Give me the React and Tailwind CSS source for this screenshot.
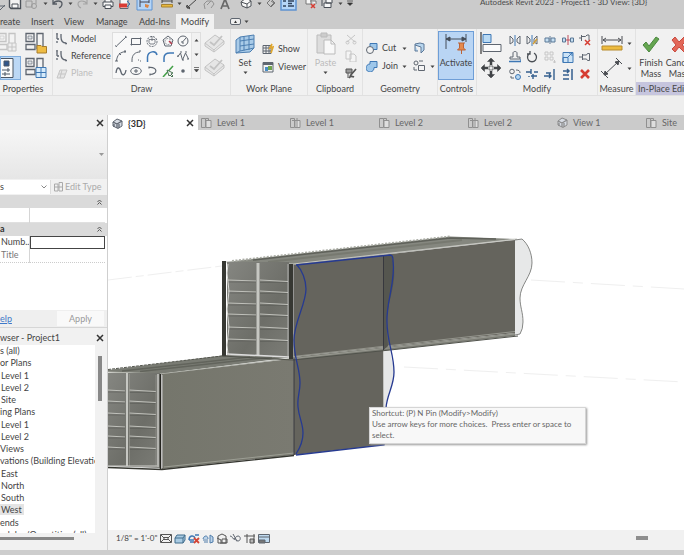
import React from "react";

const G = "#5f6670";
const B = "#3f78b5";
const P = "#c6c6c6";

function Icon({ size = 12, w, h, vb, className = "", children, stroke = G, sw = 1 }) {
  return (
    <svg
      width={w || size}
      height={h || size}
      viewBox={vb || `0 0 ${w || size} ${h || size}`}
      fill="none"
      stroke={stroke}
      strokeWidth={sw}
      className={"block shrink-0 " + className}
      aria-hidden="true"
    >
      {children}
    </svg>
  );
}

function Caret({ className = "" }) {
  return (
    <Icon w={5} h={3} className={className} stroke="none">
      <path d="M0.5 0.5h4L2.5 3z" fill="#444" />
    </Icon>
  );
}

/* ---------- quick access toolbar ---------- */

const quick = [
  ["Open", "w-[9px]", <path key="a" d="M0 10l5-5M0 6h5" />],
  ["Save", "w-[16px]", <g key="a" fill="#f2f2f2" stroke="#4a5058"><path d="M.5 -2h11v10.500H2L.5 7z" strokeWidth="1.400" /><path d="M3 4h6v4H3z" fill="#f8f8f8" /></g>],
  ["Synchronize", "w-[18px]", <g key="a" stroke="#9a9a9a"><path d="M1 1h6v6H1zM4 -1h7v5" /><circle cx="9" cy="6" r="2.500" /></g>],
  ["caret", "w-[9px]"],
  ["Undo", "w-[16px]", <path key="a" stroke="#555b63" strokeWidth="1.300" d="M1 0v4h4M1 4c2-4 9-4 9 0 0 2-1 3-3 4" />],
  ["caret", "w-[9px]"],
  ["Redo", "w-[16px]", <path key="a" stroke="#a5a5a5" strokeWidth="1.200" d="M10 0v4H6M10 4C8 0 1 0 1 4c0 2 1 3 3 4" />],
  ["caret", "w-[9px]"],
  ["Print", "w-[16px]", <g key="a" stroke="#484e56" fill="#f7f7f7"><path d="M3 2v-3h6v3M1 2h10v4.500H1z" /><path d="M3 5h6v3.500H3z" /></g>],
  ["Export PDF", "w-[20px]", <g key="a"><path d="M2 -1h8v9.500H2z" fill="#f7f7f7" /><path d="M1 3.500h8v4H1z" fill="#d93c35" stroke="none" /><path d="M9 1l3 3-3 3" stroke={B} /></g>],
  ["Activate controls", "w-[23px]", <g key="a"><path d="M-1 -1h15v11H-1z" fill="#b5d5f7" stroke="#5f93d1" /><path d="M2 2h9M2 -1v8M11 -1v4" stroke="#445" /><path d="M7 4l4 1-1 3-3-1z" fill="#d98546" stroke="none" /></g>],
  ["Measure", "w-[16px]", <g key="a"><path d="M1 1h10M1 -1v4M11 -1v4" stroke="#444" /><path d="M.5 4.500h11v2.500H.5z" fill="#e8b83d" stroke="#a78231" /></g>],
  ["caret", "w-[9px]"],
  ["Aligned dimension", "w-[17px]", <path key="a" stroke="#444" d="M1 8L11 -1M0 6l4 3M1 5v3h3z" />],
  ["Tag", "w-[17px]", <g key="a" stroke="#929292"><path d="M2 9L1 4l3-3h5l2 3-3 4M4 5l4-4" /></g>],
  ["Text", "w-[20px]", <path key="a" stroke="#686868" strokeWidth="1.700" d="M1 9L5 -1l4 10M3 6h4" />],
  ["Default 3D view", "w-[17px]", <g key="a" stroke="#4b5056" fill="#f7f7f7"><path d="M1 2l5-4 5 3v5l-4 2-5-2z" /><path d="M1 2l6 2 4-3M7 4v4" /></g>],
  ["caret", "w-[9px]"],
  ["Section", "w-[15px]", <path key="a" stroke="#777" d="M1 3l4-4 4 4-4 4zM5 1l3 2-3 3" />],
  ["Thin lines", "w-[24px]", <g key="a"><path d="M0 -1h15v11H0z" fill="#b5d5f7" stroke="#5f93d1" strokeWidth="1.500" /><path d="M2 1h3M2 6h3M7 1h6M7 3.500h4M7 6h6" stroke="#31435e" strokeWidth="1.400" /></g>],
  ["Close inactive", "w-[16px]", <g key="a"><path d="M1 -1h5v5H1zM5 1h6v3" fill="#f7f7f7" stroke="#777" /><path d="M6 4l4 4M10 4L6 8" stroke="#d63d32" strokeWidth="1.500" /></g>],
  ["Switch windows", "w-[17px]", <g key="a" stroke="#474d55" fill="#f6f6f6"><path d="M5 -2h6v5H5zM3 3h7v4.500H3z" /><path d="M1 0v6" /></g>],
  ["caret", "w-[9px]"],
  ["Customize", "w-[12px]", <path key="a" d="M0 1h6M.5 3h5L3 5.500z" stroke="#333" fill="#333" strokeWidth=".7" />],
];

function TitleBar() {
  return (
    <div className="flex h-[14px] items-start overflow-hidden bg-[#cbcbcb]">
      <div className="flex w-[480px] shrink-0 items-start">
        {quick.map(([name, width, art], i) =>
          name === "caret" ? (
            <span key={i} className={"block shrink-0 pt-[2px] " + width}>
              <Caret />
            </span>
          ) : (
            <button key={i} aria-label={name} className={"block h-[12px] shrink-0 " + width}>
              <Icon size={12} className="overflow-visible">{art}</Icon>
            </button>
          )
        )}
      </div>
      <h1 className="-mt-[4px] whitespace-nowrap text-[8px] leading-[12px] text-[#4b4b4b]">
        Autodesk Revit 2023 - Project1 - 3D View: {"{3D}"}
      </h1>
    </div>
  );
}

function RibbonTabs() {
  const tab = "h-[15px] shrink-0 text-left leading-[15px]";
  return (
    <nav className="flex h-[15px] items-start overflow-hidden bg-[#cbcbcb] text-[9px] text-[#444]">
      <button className={tab + " w-[31px]"}>reate</button>
      <button className={tab + " w-[33px]"}>Insert</button>
      <button className={tab + " w-[32px]"}>View</button>
      <button className={tab + " w-[43px]"}>Manage</button>
      <button className={tab + " w-[37px]"}>Add-Ins</button>
      <button className="h-[15px] w-[38px] shrink-0 bg-[#f1f1f1] text-center leading-[15px]">Modify</button>
      <button aria-label="Minimize ribbon" className="ml-[16px] flex h-[15px] items-center gap-[3px]">
        <Icon w={11} h={7}>
          <rect x=".5" y=".5" width="10" height="6" rx="1.500" fill="#eee" />
          <path d="M4 5h3L5.500 2.500z" fill="#333" stroke="none" />
        </Icon>
        <Caret />
      </button>
    </nav>
  );
}

/* ---------- ribbon ---------- */

function Group({ label, width, children, body = "", labelClass = "text-center" }) {
  return (
    <section className={"flex shrink-0 flex-col border-r border-[#e2e2e2] " + width}>
      <div className={"flex h-[53px] " + body}>{children}</div>
      <h2 className={"h-[13px] whitespace-nowrap text-[9px] leading-[13px] text-[#474747] " + labelClass}>{label}</h2>
    </section>
  );
}

function PropIcon({ color = G, accent, kind }) {
  return (
    <Icon size={22} stroke={color}>
      <path d="M1 1.500h8v8H1zM12 1.500h6v15h-6zM1 12.500h9v5H1z" fill="#f3f3f3" strokeWidth="1.300" />
      <path d="M3 4h4v3H3z" fill={kind ? "#dfe3e7" : "none"} strokeWidth=".6" />
      {kind === "folder" && <path d="M12 13.500h4l1 1h4.500v6.500H12z" fill="#eebc44" stroke="#a77d2c" />}
      {kind === "grid" && <path d="M11 10.500h10v10H11zM16 10.500v10M11 15.500h10" fill="#d6ebfb" stroke={B} />}
      {!kind && <path d="M11 11h8v8h-8zM15 11v8M11 15h8" fill="#eee" />}
    </Icon>
  );
}

const drawTools = [
  ["Line", <path key="a" d="M1.500 11L11 2M0 10.500l2 1.500M10 1l2 1.500" />],
  ["Rectangle", <path key="a" d="M1.500 3.500h9v6h-9zM0.500 9.500h2M9.500 3.500h2M10.500 2.500v2M1.500 8.500v2" />],
  ["Inscribed polygon", <g key="a"><circle cx="6" cy="6.500" r="5" strokeDasharray="2 1" /><path d="M3 4.500h6v3L8 9H4L3 7.500zM6 1v5" strokeWidth=".8" /></g>],
  ["Circumscribed polygon", <g key="a"><path d="M6 1l5 4-2 6H3L1 5z" /><circle cx="6" cy="6.500" r="3" strokeDasharray="2 1" strokeWidth=".7" /><path d="M7 6l3 3" stroke="#b63a4c" strokeWidth="1.500" /></g>],
  ["Circle", <g key="a"><circle cx="6" cy="6" r="5" /><path d="M5.500 7L9 3M5 6v2h2" /></g>],
  ["Arc", <path key="a" d="M1.500 11C2 5 5 2 11 1.500M0 11h3M10 0v3M4 3l2 2" />],
  ["Center arc", <path key="a" d="M2 10C2 5 5 2 10 2M1 11h2M9 1h2M8 10h1M10 11h1" />],
  ["Tangent arc", <path key="a" d="M1.500 12V7C2 1 10 0 11 5" stroke={B} strokeWidth="1.500" />],
  ["Fillet arc", <path key="a" d="M2 12V8c0-4 2-5 6-5h4" stroke={B} strokeWidth="1.500" />],
  ["Spline", <path key="a" d="M.5 7l3-4 2 7 3-7 3 6M0 6h2M3 2h2M5 10h2M8 2h2M10 9h2" />],
  ["Spline through points", <path key="a" d="M1 8C2 0 5 3 6 7s4 4 5-2" strokeWidth="1.300" />],
  ["Ellipse", <g key="a"><ellipse cx="6" cy="6" rx="5.300" ry="3.500" /><path d="M6 4v4M4 6h4" /></g>],
  ["Partial ellipse", <path key="a" d="M3 2.500c9-1 9 7 1 7M3 1.500v2M4 8.500v2" strokeWidth="1.200" />],
  ["Pick lines", <g key="a"><path d="M1 12L11 1" stroke="#43a047" strokeWidth="1.500" /><path d="M5 5l6 3-2 1 2 2-1 1-2-2-1 1z" fill="#eee" stroke="#4d7756" /></g>],
  ["Point", <circle key="a" cx="6" cy="6" r="1.800" fill={G} stroke="none" />],
];

const modifyTools = [
  ["Mirror pick axis", <g key="a"><path d="M1 2l3 3v3l-3 2zM11 2L8 5v3l3 2z" /><path d="M6 1v11" stroke={B} /></g>],
  ["Mirror draw axis", <g key="a"><path d="M1 2l3 3v3l-3 2zM11 2L8 5v3l3 2z" /><path d="M6 1v11" stroke={B} /><path d="M7 10l4-5" stroke="#cf9c35" strokeWidth="1.500" /></g>],
  ["Split element", <path key="a" d="M1 4h4v4H1zM7 4h4v4H7zM6 2v8" fill="#c6dff2" stroke="#5b7896" />],
  ["Split with gap", <g key="a"><path d="M0.500 4h3v4h-3zM8.500 4h3v4h-3z" fill="#c6dff2" stroke="#5b7896" /><path d="M6 1v10M4 6h4" stroke="#bf4c5a" /></g>],
  ["Unpin", <g key="a"><path d="M0 4h2M2.500 1v6M2.500 2.500h4L8 1h2v5" /><path d="M6 6l5 5M11 6l-5 5" stroke="#d63d32" strokeWidth="1.500" /></g>],
  ["Offset", <g key="a"><path d="M1 8V6h3V2c0-2 4-2 4 0v4h3v2z" /><path d="M0 10.500h12V8" stroke={B} strokeWidth="1.400" /></g>],
  ["Rotate", <path key="a" d="M4 2.200a4.500 4.500 0 1 0 4 0M4 0v3H1" stroke="#4a4f55" strokeWidth="1.300" />],
  ["Array", <path key="a" d="M1 1h3v3H1zM6 1h3v3H6zM1 6h3v3H1zM6 6h3v3H6zM9 11h3M10.500 9v3" stroke={P} />],
  ["Scale", <path key="a" d="M1 1.500h10v10H1zM1 6.500h5v5H1zM6 6l4-4M7 2h3v3" fill="#cce3f6" stroke={B} />],
  ["Pin", <path key="a" d="M0 6h3M3.500 3v6M3.500 4h4l1-1.500h2v7h-2L7.500 8h-4" />],
  ["Copy", <g key="a"><circle cx="3" cy="3.500" r="2.300" /><circle cx="9" cy="9" r="2.500" fill="#b9d8f2" stroke={B} /><path d="M7 2c3 0 4 1 4 3M2 8v2h3" /></g>],
  ["Trim extend corner", <path key="a" d="M0 4h5M5 1v5M5 8h6M7 6v5M8 4h4M3 8v1" stroke="#345f8e" strokeWidth="1.400" />],
  ["Trim single", <path key="a" d="M0 8h7M5 6l2 2-2 2M10 1v11M2 5h5" stroke="#345f8e" strokeWidth="1.400" />],
  ["Trim multiple", <path key="a" d="M1 3h6M1 7h6M1 11h6M5 1l2 2-2 2M10 1v11" stroke="#345f8e" strokeWidth="1.500" />],
  ["Delete", <path key="a" d="M2 2l8 8M10 2l-8 8" stroke="#d63d32" strokeWidth="2.600" />],
];

function ToolGrid({ tools, className }) {
  return (
    <div className={"grid grid-cols-5 " + className}>
      {tools.map(([name, art]) => (
        <button key={name} aria-label={name} className="flex items-center justify-center">
          <Icon size={12}>{art}</Icon>
        </button>
      ))}
    </div>
  );
}

function Slab() {
  return (
    <Icon size={21} stroke="#c3c3c3">
      <path d="M1 11l10-8 9 6-10 9zM1 11v3l9 6v-3M10 20l10-8V9" fill="#e6e6e6" />
      <path d="M6 10l4 3 8-9" strokeWidth="1.800" />
    </Icon>
  );
}

function Ribbon() {
  const row = "flex items-center whitespace-nowrap text-[9px] leading-[12px] text-[#444]";
  return (
    <div className="h-[86px] overflow-hidden bg-[#eeeeee]">
      <div className="flex h-[67px] border-b border-[#e0e0e0] bg-[#f1f1f1]">
        <Group label="Properties" width="w-[53px]" labelClass="pr-[6px] text-center" body="gap-[4px] pt-[3px]">
          <div className="flex w-[21px] flex-col gap-[2px]">
            <button aria-label="Type properties" className="-ml-[3px] h-[22px]"><PropIcon color="#c4c4c4" /></button>
            <button aria-label="Properties" className="h-[24px] w-[21px] border border-[#7fadde] bg-[#bcd8f5]">
              <Icon w={14} h={22} stroke="#4b5665">
                <path d="M0 1.500h12v19H0" fill="#fafafa" />
                <path d="M3 4h5v5H3z" fill="#31568a" />
                <path d="M1 13h8M1 17h8M7 11v4M4 15v4" />
              </Icon>
            </button>
          </div>
          <div className="flex flex-col gap-[3px]">
            <button aria-label="Family category"><PropIcon kind="folder" /></button>
            <button aria-label="Family types"><PropIcon kind="grid" /></button>
          </div>
        </Group>

        <Group label="Draw" width="w-[178px]" body="pt-[3px]">
          <div className="flex w-[59px] shrink-0 flex-col gap-[3px] pl-[3px]">
            {["Model", "Reference", "Plane"].map((t, i) => (
              <button key={t} className={row + " h-[14px] gap-[3px]"}>
                <Icon size={12} stroke={i === 2 ? P : G}>
                  {i === 2 ? <path d="M1 11L4 3h7L8 11zM3 7h6M6 3l-2 8" fill="#e6e6e6" /> : <path d="M0 1h2M1 2v4M1 8v2M1 6h2M5 1v3c0 4 2 6 5 6M9 10.500h2" strokeWidth="1.300" />}
                </Icon>
                <span className={i === 2 ? "text-[#bdbdbd]" : ""}>{t}</span>
              </button>
            ))}
          </div>
          <div className="flex h-[47px] w-[89px] shrink-0 border border-[#dedede] bg-[#f8f8f8]">
            <ToolGrid tools={drawTools} className="w-[78px]" />
            <div className="flex w-[9px] flex-col items-center justify-around border-l border-[#e3e3e3] bg-[#f1f1f1]">
              <button aria-label="Scroll up"><Caret className="rotate-180" /></button>
              <button aria-label="Scroll down"><Caret /></button>
              <button aria-label="More tools"><Icon w={5} h={5} stroke="#444"><path d="M0 .5h5M.5 2.500h4L2.500 5z" strokeWidth=".7" fill="#444" /></Icon></button>
            </div>
          </div>
          <div className="ml-[3px] flex flex-col gap-[3px]">
            <button aria-label="Draw on face"><Slab /></button>
            <button aria-label="Draw on work plane"><Slab /></button>
          </div>
        </Group>

        <Group label="Work Plane" width="w-[77px]" body="pl-[4px]">
          <button className="flex w-[20px] flex-col items-center pt-[5px] text-[9px] leading-[12px] text-[#444]">
            <Icon size={20} stroke="#4d7fb1">
              <path d="M1 6l4-3 14-2v13l-4 4-14 1z" fill="#a9cbe8" />
              <path d="M5 3v14l-4 2M5 7l14-2M5 12l14-2M9 2.500v14M14 2v14M5 17l14-3" />
            </Icon>
            <span className="pt-[3px]">Set</span>
            <Caret className="mt-[2px]" />
          </button>
          <div className="ml-[7px] flex flex-col gap-[4px] pt-[13px]">
            <button className={row + " h-[14px] gap-[4px]"}>
              <Icon size={12}><path d="M1 2.500h8v8H1zM1 5h8M1 8h8M4 2v9M7 2v9" /><path d="M10 1l-2 4 3-1-2 6" stroke="#e0a72e" strokeWidth="1.700" /></Icon>
              Show
            </button>
            <button className={row + " h-[14px] gap-[4px]"}>
              <Icon size={12}><path d="M1 1.500h10v9.500H1z" fill="#f3f3f3" /><path d="M1 3h10" strokeWidth="2" /><path d="M3 6h3v4H3z" fill="#488cc5" stroke="none" /><path d="M6 5h4v4H6z" fill="#70a44e" stroke="none" /></Icon>
              Viewer
            </button>
          </div>
        </Group>

        <Group label="Clipboard" width="w-[55px]" body="pl-[7px] pt-[3px]">
          <button className="flex w-[21px] flex-col items-center text-[9px] leading-[12px] text-[#bcbcbc]">
            <Icon w={20} h={23} stroke="#bbb"><path d="M1 3h14v18H1z" fill="#ddd" /><path d="M5 1h6v4H5z" fill="#ccc" /><path d="M8 8h7l4 4v10H8z" fill="#f8f8f8" /><path d="M15 8v4h4" /></Icon>
            <span className="pt-[2px]">Paste</span>
            <Caret className="mt-[2px]" />
          </button>
          <div className="ml-[9px] flex flex-col gap-[5px] pt-[1px]">
            <button aria-label="Cut to clipboard"><Icon stroke={P}><path d="M2 2l8 7M10 2L2 9" /><circle cx="2.500" cy="9.500" r="1.500" /><circle cx="9.500" cy="9.500" r="1.500" /></Icon></button>
            <button aria-label="Copy to clipboard"><Icon stroke={P}><path d="M1 1h5v8H1zM5 4h4l2 2v6H5z" fill="#f4f4f4" /></Icon></button>
            <button aria-label="Match type"><Icon stroke="#555"><path d="M1 2h6v4H1zM3 6v5" fill="#999" /><path d="M5 9l6-7M4 11c1-2 3-2 5-1" strokeWidth="1.700" /></Icon></button>
          </div>
        </Group>

        <Group label="Geometry" width="w-[75px]" body="pl-[3px]">
          <div className="flex w-[45px] flex-col gap-[4px] pt-[12px]">
            <button className={row + " h-[14px] gap-[4px]"}>
              <Icon><path d="M4 1.500h7v6H4z" fill="#9ec7ea" stroke={B} /><circle cx="4" cy="8" r="3.500" fill="#f4f4f4" /></Icon>
              Cut
              <Caret className="ml-[2px]" />
            </button>
            <button className={row + " h-[14px] gap-[4px]"}>
              <Icon stroke={B}><path d="M4 1.500h7v6H8a4 4 0 1 1-4-3.500z" fill="#9ec7ea" /></Icon>
              Join
              <Caret />
            </button>
          </div>
          <div className="ml-[2px] flex flex-col gap-[4px] pt-[12px]">
            <button aria-label="Cope" className="flex h-[14px] items-center"><Icon stroke="#5c7898"><path d="M2 2l5-1 4 1v6l-3 3V5L2 3zM2 3v6h3" fill="#b8d6ee" /></Icon></button>
            <button aria-label="Paint" className="flex h-[14px] items-center gap-[5px]"><Icon><circle cx="3" cy="3" r="2" /><path d="M5.500 5.500h6v5h-6zM1 7v3h3M6 1h4" fill="#f4f4f4" /></Icon><Caret /></button>
          </div>
        </Group>

        <Group label="Controls" width="w-[39px]" labelClass="pr-[1px] text-center" body="pt-[2px]">
          <button className="flex h-[49px] w-[36px] flex-col items-center border border-[#6e9ed7] bg-[#b9d5f4] text-[9px] leading-[12px] text-[#444]">
            <Icon w={24} h={23} stroke="#444d59">
              <path d="M2 2v15M22 2v8M2 7h20" />
              <path d="M2 7l4-2v4zM22 7l-4-2v4z" fill="#444d59" />
              <path d="M14 11h7M15.500 11v5l-2 2h8l-2-2v-5M17.500 18v4" fill="#e58a4d" stroke="#bd6437" />
            </Icon>
            <span className="pt-[2px]">Activate</span>
          </button>
        </Group>

        <Group label="Modify" width="w-[121px]" body="pl-[3px]">
          <div className="flex flex-col gap-[3px] pt-[3px]">
            <button aria-label="Align"><Icon size={22}><path d="M1 0v22" strokeWidth="1.300" stroke="#444" /><path d="M3 2.500h8v8H3z" fill="#b9daf4" stroke={B} /><path d="M3 12.500h18v7H3z" fill="#fafafa" /></Icon></button>
            <button aria-label="Move"><Icon size={22} stroke="#404346"><path d="M11 2v6M11 14v6M2 11h6M14 11h6" strokeWidth="2.500" /><path d="M7.500 4.500L11 1l3.500 3.500zM7.500 17.500L11 21l3.500-3.500zM4.500 7.500L1 11l3.500 3.500zM17.500 7.500L21 11l-3.500 3.500z" fill="#404346" strokeWidth=".5" /><path d="M9 9h4v4H9z" fill="#eee" strokeWidth=".7" /></Icon></button>
          </div>
          <ToolGrid tools={modifyTools} className="ml-[4px] mt-[2px] h-[51px] w-[88px]" />
        </Group>

        <Group label="Measure" width="w-[38px]" body="pl-[3px]">
          <div className="flex flex-col gap-[6px] pt-[6px]">
            <button aria-label="Measure between references" className="flex items-center gap-[4px]"><Icon w={22} h={16} stroke="#4a4d52"><path d="M1 1v8M21 1v8M2 5h18M5 3L2 5l3 2M17 3l3 2-3 2" /><path d="M1 11h20v4H1z" fill="#edbb3f" stroke="#b78b2e" /></Icon><Caret /></button>
            <button aria-label="Dimension" className="flex items-center gap-[4px]"><Icon w={22} h={22} stroke="#4a4d52"><path d="M3 18L18 4M0 14l7 7M15 1l6 6" /><path d="M3 18l1-4 3 3zM18 4l-4 1 3 3z" fill="#4a4d52" /></Icon><Caret /></button>
          </div>
        </Group>

        <Group label="In-Place Editor" width="w-[80px]" labelClass="bg-[#c6c5de] pl-[2px] text-left" body="gap-[2px] pl-[2px]">
          <button className="flex w-[26px] flex-col items-center pt-[7px] text-[9px] leading-[11px] text-[#444]">
            <Icon w={18} h={17}><path d="M1 9l3-3 3 4 7-9 3 2-10 13z" fill="#65a650" stroke="#4b8740" /></Icon>
            <span className="pt-[4px]">Finish<br />Mass</span>
          </button>
          <button className="flex w-[26px] flex-col items-center pt-[7px] text-[9px] leading-[11px] text-[#444]">
            <Icon w={17} h={17}><path d="M1 4l3-3 4 5 5-5 3 3-5 5 5 4-3 3-5-5-4 5-3-3 4-4z" fill="#e26758" stroke="#c8493e" /></Icon>
            <span className="pt-[4px]">Cancel<br />Mass</span>
          </button>
        </Group>
      </div>
    </div>
  );
}

/* ---------- left palettes ---------- */

function Close({ label }) {
  return (
    <button aria-label={label} className="shrink-0">
      <Icon size={8} stroke="#333" sw={1.500}><path d="M1 1l6 6M7 1L1 7" /></Icon>
    </button>
  );
}

function Chevrons() {
  return (
    <Icon w={5} h={6} stroke="#555"><path d="M.5 3l2-2 2 2M.5 5.500l2-2 2 2" /></Icon>
  );
}

function PropertiesPalette() {
  const th = "w-[29px] overflow-hidden whitespace-nowrap border-r border-[#d5d5d5] p-0 text-left font-normal";
  return (
    <section className="flex h-[213px] flex-col border-b border-[#d6d6d6] bg-white text-[9px] leading-[12px]">
      <header className="flex h-[15px] shrink-0 items-center justify-end bg-[#f1f1f1] pr-[3px]"><Close label="Close properties" /></header>
      <div className="flex h-[49px] shrink-0 items-center justify-end bg-linear-to-b from-[#f6f6f6] to-[#e6e6e6] pr-[3px]">
        <button aria-label="Type selector"><Icon w={5} h={3} stroke="none"><path d="M0 0h5L2.500 3z" fill="#999" /></Icon></button>
      </div>
      <div className="flex h-[16px] shrink-0 items-center bg-[#f1f1f1] py-[1px]">
        <div className="relative h-[14px] w-[51px] border-r border-[#ddd] bg-white">
          <select aria-label="Filter" className="h-[14px] w-full appearance-none bg-transparent text-[9px] leading-[12px] text-[#444]"><option>s</option></select>
          <Icon w={6} h={4} stroke="#888" className="pointer-events-none absolute right-[3px] top-[5px]"><path d="M.5.5L3 3 5.500.5" /></Icon>
        </div>
        <button className="flex items-center gap-[2px] whitespace-nowrap pl-[3px] text-[9px] text-[#aaa]">
          <Icon w={9} h={10} stroke="#aaa"><path d="M.5 2h3.500v7H.5zM5 .5h3.500V9H5zM.5 5h8" /></Icon>
          Edit Type
        </button>
      </div>
      <div className="flex h-[13px] shrink-0 items-center justify-end bg-[#dadada] pr-[5px]"><Chevrons /></div>
      <table className="w-[105px] table-fixed border-collapse">
        <tbody>
          <tr className="h-[14px] border-b border-[#e0e0e0]"><th className={th}></th><td /></tr>
        </tbody>
      </table>
      <div className="flex h-[13px] shrink-0 items-center justify-between bg-[#dadada] pr-[5px] font-bold text-[#333]">a<Chevrons /></div>
      <table className="w-[105px] table-fixed border-collapse">
        <tbody>
          <tr className="h-[13px]">
            <th className={th + " pl-px text-[#444]"}><label htmlFor="numb">Numb...</label></th>
            <td className="p-0"><input id="numb" className="block h-[13px] w-full border border-[#444] bg-white" /></td>
          </tr>
          <tr className="h-[14px] border-b border-dotted border-[#ccc]">
            <th className={th + " pl-px text-[#777]"}>Title</th><td />
          </tr>
        </tbody>
      </table>
      <footer className="mt-auto flex h-[17px] shrink-0 items-center justify-between bg-[#efefef] pr-[3px]">
        <a href="#help" className="text-[#3e78c8] underline">elp</a>
        <button className="h-[15px] w-[47px] bg-[#f9f9f9] text-[#999]">Apply</button>
      </footer>
    </section>
  );
}

const tree = [
  ["s (all)", 0], ["or Plans", 0], ["Level 1", 1], ["Level 2", 1], ["Site", 1], ["ing Plans", 0], ["Level 1", 1], ["Level 2", 1],
  ["Views", 0], ["vations (Building Elevatio", 0], ["East", 1], ["North", 1], ["South", 1], ["West", 1], ["ends", 0], ["edules/Quantities (all)", 0],
];

function ProjectBrowser() {
  return (
    <section className="flex min-h-0 flex-1 flex-col pt-[3px] text-[9px] leading-[12px] text-[#444]">
      <header className="flex h-[14px] shrink-0 items-center justify-between pr-[3px]">
        <h2>wser - Project1</h2>
        <Close label="Close project browser" />
      </header>
      <div className="flex min-h-0 flex-1">
        <div className="min-w-0 flex-1 overflow-hidden bg-white">
          <ul className="flex h-[196px] flex-col">
            {tree.map(([t, d], i) => (
              <li key={i} className={"flex-1 whitespace-nowrap " + (d ? "pl-px" : "")}>
                <span className={t === "West" ? "-ml-px bg-[#e4e4e4] pl-px pr-[2px]" : ""}>{t}</span>
              </li>
            ))}
          </ul>
        </div>
        <div className="w-[12px] shrink-0 pl-[3px] pt-[11px]"><div className="h-[45px] w-[4px] bg-[#888]" /></div>
      </div>
      <div className="h-[17px] shrink-0 pt-[4px]"><div className="h-[3px] w-[74px] bg-[#888]" /></div>
    </section>
  );
}

/* ---------- drawing area ---------- */

function House({ stroke = G }) {
  return <Icon size={11} stroke={stroke}><path d="M1 4l4-3 5 2v5L6 10.500 1 8z" fill="#d7dce4" /><path d="M1 4l4 2 5-3M5 6v4M2 6v3M7 6v4" strokeWidth="1.300" /></Icon>;
}

function Sheet({ ceiling }) {
  return <Icon size={11} stroke="#909090"><path d="M.5 1.500h4v9h-4z" /><path d="M5 3.500h5v7H5z" fill="#dedede" />{ceiling && <path d="M2 3.500h7M7 1v9" />}{!ceiling && <path d="M4.500 1.500h3v2" />}</Icon>;
}

const viewTabs = [["Level 1", 0], ["Level 1", 1], ["Level 2", 0], ["Level 2", 1], ["View 1", 2], ["Site", 0]];

function ViewTabs() {
  return (
    <nav className="flex h-[15px] shrink-0 overflow-hidden bg-[#cbcbcb] text-[9px] leading-[15px]">
      <div className="flex w-[90px] shrink-0 items-center bg-white pl-[4px] pr-[4px] pt-px">
        <House />
        <button className="ml-[5px] font-bold text-[#333]">{"{3D}"}</button>
        <span className="ml-auto"><Close label="Close view" /></span>
      </div>
      {viewTabs.map(([t, k], i) => (
        <button key={i} className="flex w-[89px] shrink-0 items-center gap-[5px] pl-[3px] text-[#666]">
          {k === 2 ? <House stroke="#8b8b8b" /> : <Sheet ceiling={k === 1} />}
          {t}
        </button>
      ))}
    </nav>
  );
}

const upperRails = [281, 292, 304, 315, 328, 340];
const lowerRails = [391, 402, 414, 427, 437, 448];

function Model() {
  return (
    <svg viewBox="108 130 576 400" className="block h-full w-full" fill="none" role="img" aria-label="Two stacked shipping containers">
      <defs>
        <linearGradient id="door" x1="0" y1="0" x2="1" y2="1">
          <stop offset="0" stopColor="#858681" /><stop offset=".6" stopColor="#6d6e68" /><stop offset="1" stopColor="#7b7c76" />
        </linearGradient>
        <linearGradient id="side" x1="0" y1="0" x2="1" y2="0">
          <stop offset="0" stopColor="#75766c" /><stop offset="1" stopColor="#7a7a71" />
        </linearGradient>
      </defs>
      <g stroke="#efefef">
        <path d="M108 280L222 266" strokeDasharray="24 4 8 4" />
        <path d="M531 280L684 289M404 367L684 382" strokeDasharray="34 8 10 8" />
      </g>
      {/* lower container */}
      <path d="M108 370L226 355L294 357L161 374L108 372z" fill="#797b73" />
      <path d="M108 369.500L226 355.500" stroke="#55574f" strokeDasharray="3 1" />
      <path d="M122 371L250 357M140 371.500L272 357" stroke="#62645c" strokeWidth="1.500" />
      <path d="M108 372L161 374L294 358" stroke="#b5b7af" />
      <path d="M108 373h52v95l-52-2z" fill="url(#door)" />
      {lowerRails.map((y) => (
        <g key={y}>
          <path d={`M108 ${y - 1}L125 ${y}M129 ${y - 1}l27 1.500`} stroke="#c0c1bb" />
          <path d={`M108 ${y + 1}h17M129 ${y + 1.500}h27`} stroke="#5b5c57" strokeWidth=".6" />
        </g>
      ))}
      <path d="M127 373v93" stroke="#c6c7c2" strokeWidth="2" />
      <path d="M129.500 374v92M156 375v91" stroke="#96978f" strokeWidth=".7" />
      <path d="M108 466h49" stroke="#d0d0cc" />
      <path d="M158 374v93" stroke="#c9c9c5" strokeWidth="1.500" />
      <path d="M160.500 374v95" stroke="#24241f" strokeWidth="1.600" />
      <path d="M162 374L294 358.500V455L162 469z" fill="url(#side)" />
      <path d="M162.500 375v93" stroke="#bbb" strokeWidth=".6" />
      <path d="M108 467.500L162 469.500L294 455.500" stroke="#363731" strokeWidth="1.300" />
      <path d="M164 467L294 453" stroke="#9c9e94" />
      <path d="M294 358L383.500 349V445L294 455z" fill="#65645d" />
      <path d="M383.500 349L391 347C389 356 394 362 394 372C394 386 387 394 386 408L384 445z" fill="#e6e7e7" />
      {/* upper container */}
      <path d="M226 262L450 236.500L517 239L293 265z" fill="#85877f" />
      <path d="M232 261L450 236.500" stroke="#aaaca4" strokeWidth="2" strokeDasharray="2 1.500" />
      <path d="M253 260L450 238L496 239" stroke="#5f615a" strokeWidth="1.500" />
      <path d="M268 262L462 240" stroke="#777970" strokeWidth="2" />
      <path d="M226 262L293 264L517 239" stroke="#c5c6c0" />
      <path d="M227 262h62v95l-62-2z" fill="url(#door)" />
      {upperRails.map((y) => (
        <g key={y}>
          <path d={`M228 ${y - 1}l28 1M260 ${y - 1}l28 1.500`} stroke="#c0c1bb" />
          <path d={`M228 ${y + 1}h28M260 ${y + 1.500}h28`} stroke="#5b5c57" strokeWidth=".6" />
        </g>
      ))}
      <path d="M228 264q-2 9 0 18t0 18t0 18t0 18t0 18" stroke="#d8d8d4" />
      <path d="M258 263v92" stroke="#c6c7c2" strokeWidth="3" />
      <path d="M227 354L289 357" stroke="#ddd" strokeWidth="1.500" />
      <path d="M222 261h4v95h-4z" fill="#373833" />
      <path d="M289 264h4v95h-4z" fill="#373833" />
      <path d="M288 264v92" stroke="#ccc" strokeWidth=".7" />
      <path d="M293 265L515 240V333L293 357z" fill="#65645d" />
      <path d="M293.500 265v92" stroke="#aaa" strokeWidth=".7" />
      <path d="M293 357L515 333V336L390 350L293 360z" fill="#7c7d75" />
      <path d="M222 356L293 360L390 350L518 336" stroke="#50524b" />
      <path d="M293 356.500L515 331.500M293 358.500L515 334" stroke="#9fa198" strokeWidth=".8" />
      <path d="M515 240L522 239C528 244 532 253 532 263C532 276 520 285 520 298C520 307 523 312 523 322Q523 329 520 334L515 335z" fill="#e7e8e8" />
      <path d="M515 240L522 239C528 244 532 253 532 263C532 276 520 285 520 298C520 307 523 312 523 322Q523 329 520 334L515 335" stroke="#696b68" strokeWidth=".8" />
      <path d="M383.500 256L391 255C397 270 394 284 389 304Q385 322 388 346L383.500 350z" fill="#55564f" />
      <path d="M383.500 256v94M294 358v97" stroke="#2d2f38" strokeWidth=".8" />
      {/* selected outline */}
      <g stroke="#263a91" strokeWidth="1.300">
        <path d="M296 265L390 255Q393 255 393 260C396 282 386 301 387 322C387 342 394 354 394 372C394 386 387 394 386 408L384 445L296 455" />
        <path d="M297 265C302 270 306 280 306 289C306 304 294 322 294 340C294 359 300 368 300 383C300 392 297 398 298 407C299 418 303 423 303 433C303 442 300 448 296 454" />
      </g>
    </svg>
  );
}

const viewIcons = [
  ["Detail level", <path key="a" d="M.5 1.500h11v8H.5zM1 2l3 3M11 2L8 5M1 9l3-3M11 9L8 6M4 4.500h4v2H4z" stroke="#555" />],
  ["Visual style", <path key="a" d="M1 5l2-3h8v5l-2 3H1zM1 5h8v5M9 5l2-3" fill="#a9cbe3" stroke="#416c8c" />],
  ["Sun path", <g key="a"><path d="M1 7c0-5 5-5 6-2M1 7h5M2 9h4M7 2h4" stroke={B} strokeWidth="1.500" /><path d="M6 5l5 5M11 5l-5 5" stroke="#d34435" strokeWidth="1.800" /></g>],
  ["Shadows", <path key="a" d="M1 7h5M2 9h4M1 6c1-4 5-4 5 0M8 2l3 2v5l-3 1z" fill="#bcd4ea" stroke="#507daa" />],
  ["Crop view", <path key="a" d="M2 3l4-2 4 2v7H2zM1 5l4 2v4M6 6h5v4H6z" stroke="#555" />],
  ["Show crop", <path key="a" d="M0 3c3 0 2 3 4 3 2 0 1-3 4-3s3 5 0 5-2-2-4-2M3 1l4 7" />],
  ["Lock view", <path key="a" d="M0 3h11M3 1v9M10 1v9M6 6h4v4H6z" fill="#b6b6b6" stroke="#555" />],
  ["Temporary hide", <g key="a"><path d="M.5 1.500h11v8H.5zM1 4h10" fill="#bfdaf0" /><path d="M1 7h6v3H1z" fill="#777" /></g>],
];

function ViewBar() {
  return (
    <div className="flex h-[20px] shrink-0 items-center bg-[#f1f1f1] pb-[4px] pl-[8px]">
      <button className="w-[44px] shrink-0 whitespace-nowrap text-left text-[8px] leading-[12px] text-[#444]">1/8" = 1'-0"</button>
      <div className="flex gap-[2px]">
        {viewIcons.map(([n, art]) => (
          <button key={n} aria-label={n}><Icon w={12} h={11}>{art}</Icon></button>
        ))}
      </div>
      <div className="ml-auto mr-[36px] h-[4px] w-[12px] bg-[#8e8e8e]" />
    </div>
  );
}

export default function App() {
  return (
    <div className="flex h-screen w-full flex-col overflow-hidden bg-[#cdcdcd] font-['Lato','Open_Sans',sans-serif]">
      <TitleBar />
      <RibbonTabs />
      <Ribbon />
      <div className="flex min-h-0 flex-1 pb-[5px]">
        <aside className="flex w-[108px] shrink-0 flex-col border-r border-[#cfcfcf] bg-[#f1f1f1]">
          <PropertiesPalette />
          <ProjectBrowser />
        </aside>
        <main className="flex min-w-0 flex-1 flex-col bg-white">
          <ViewTabs />
          <div className="relative min-h-0 flex-1">
            <Model />
            <div role="tooltip" className="absolute left-[261px] top-[277px] w-[217px] whitespace-pre border border-[#d5d5d5] bg-[#f8f8f8] px-[2px] pb-[2px] text-[8px] leading-[11px] text-[#666] shadow-[1px_1px_2px_#999]">
              {"Shortcut: (P) N Pin (Modify>Modify)\nUse arrow keys for more choices.  Press enter or space to\nselect."}
            </div>
          </div>
          <ViewBar />
        </main>
      </div>
    </div>
  );
}
